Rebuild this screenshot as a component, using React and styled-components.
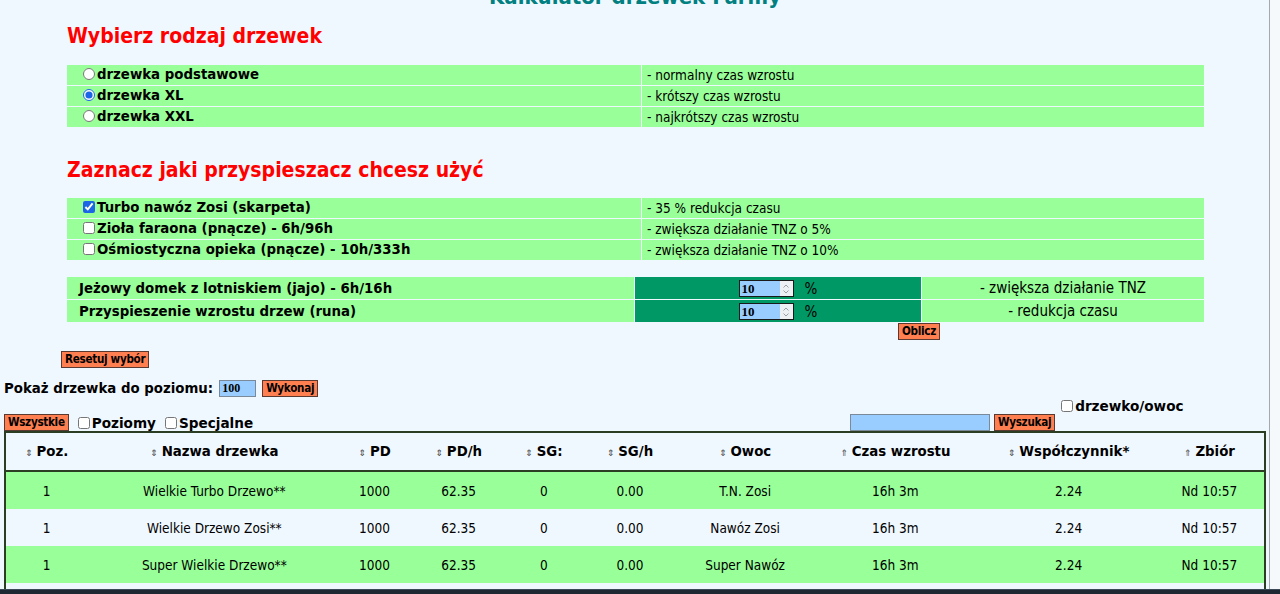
import React from 'react';
import styled, { createGlobalStyle } from 'styled-components';

const GlobalStyle = createGlobalStyle`
  html, body {
    margin: 0;
    padding: 0;
    background: #f0f8ff;
    overflow: hidden;
  }
  body {
    font-family: "DejaVu Sans", Verdana, sans-serif;
    color: #000;
  }
`;

const LIGHT = '#99ff99';
const DARK = '#009966';

const Page = styled.div`
  height: 594px;
  overflow: hidden;
`;

const Title = styled.h1`
  margin: -14px 0 0;
  padding-right: 10px;
  font: bold 22px/22px "DejaVu Sans Condensed", Tahoma, sans-serif;
  color: #008080;
  text-align: center;
`;

const Section = styled.div`
  margin-left: 66px;
  width: 1139px;
`;

const Heading = styled.h2`
  margin: ${({ $top }) => $top}px 0 0 1px;
  font: bold 21px/24px "DejaVu Sans Condensed", Tahoma, sans-serif;
  color: #ff0000;
`;

const OptionTable = styled.table`
  margin-top: ${({ $top }) => $top}px;
  width: 1139px;
  border-spacing: 1px;
  table-layout: fixed;
`;

const LabelCell = styled.td`
  width: ${({ $w }) => $w || 558}px;
  height: ${({ $h }) => $h || 20}px;
  padding: 0 0 0 ${({ $pad }) => $pad ?? 16}px;
  background: ${LIGHT};
  font: bold 13.33px "DejaVu Sans", Verdana, sans-serif;
  white-space: nowrap;
`;

const DescCell = styled.td`
  padding: 0 0 0 5px;
  background: ${LIGHT};
  font: 13.5px "DejaVu Sans Condensed", Tahoma, sans-serif;
  white-space: nowrap;
`;

const Choice = styled.label`
  display: inline-flex;
  align-items: center;
  gap: 2px;
`;

const Tick = styled.input`
  width: 12px;
  height: 12px;
  margin: 0;
  accent-color: #1a66e6;
`;

const InputCell = styled.td`
  width: 284px;
  background: ${DARK};
  text-align: center;
  white-space: nowrap;
`;

const BoostDesc = styled.td`
  background: ${LIGHT};
  text-align: center;
  font: 15px "DejaVu Sans Condensed", Tahoma, sans-serif;
`;

const NumberBox = styled.span`
  display: inline-flex;
  vertical-align: middle;
  box-sizing: border-box;
  width: 55px;
  height: 17px;
  border: 1px solid #1a1a1a;
  background: #99ccff;
`;

const NumberValue = styled.input`
  width: 38px;
  padding: 0 0 0 2px;
  border: 0;
  background: transparent;
  font: bold 13px/15px "Liberation Serif", serif;
  outline: none;
`;

const Spinner = styled.span`
  flex: 1;
  display: flex;
  align-items: center;
  justify-content: center;
  background: #eef1f4;
`;

const Percent = styled.span`
  margin-left: 11px;
  vertical-align: middle;
  font: 15px "DejaVu Sans Condensed", Tahoma, sans-serif;
`;

const Button = styled.button`
  box-sizing: border-box;
  height: 17px;
  padding: 0 3px;
  border: 1px solid #5a3a30;
  border-radius: 0;
  background: #ff7f50;
  color: #000;
  font: bold 11.6px/13px "DejaVu Sans Condensed", Tahoma, sans-serif;
  letter-spacing: -0.3px;
  cursor: pointer;
`;

const CalcRow = styled.div`
  display: flex;
  padding-left: 832px;
`;

const ResetRow = styled.div`
  display: flex;
  margin: 11px 0 0 61px;
`;

const LevelRow = styled.div`
  display: flex;
  align-items: center;
  gap: 6px;
  height: 17px;
  margin-top: 12px;
  padding-left: 4px;
  font: bold 13.33px/16px "DejaVu Sans", Verdana, sans-serif;
`;

const Field = styled.input`
  box-sizing: border-box;
  width: ${({ $w }) => $w}px;
  height: 17px;
  padding: 0 2px;
  border: 1px solid #7a8a99;
  background: #99ccff;
  font: bold 12px "Liberation Serif", serif;
  outline: none;
`;

const FilterRow = styled.div`
  display: grid;
  grid-template-columns: 846px auto;
  align-items: end;
  margin-top: 1px;
  padding-left: 4px;
  font: bold 13.6px/16px "DejaVu Sans", Verdana, sans-serif;
`;

const Group = styled.div`
  display: flex;
  align-items: flex-end;
  gap: ${({ $gap }) => $gap}px;
`;

const RaisedChoice = styled(Choice)`
  margin: 0 0 17px 2px;
`;

const DataTable = styled.table`
  margin-left: 4px;
  width: 1262px;
  border: 2px solid #2b3d22;
  border-collapse: collapse;
  table-layout: fixed;
`;

const Th = styled.th`
  height: 37px;
  padding: 0;
  border-bottom: 2px solid #2b3d22;
  background: #f0f8ff;
  font: bold 13.33px "DejaVu Sans", Verdana, sans-serif;
  white-space: nowrap;
`;

const Arrow = styled.span`
  margin-right: 4px;
  font: 9px "DejaVu Sans", sans-serif;
  color: #444;
`;

const Row = styled.tr`
  background: ${({ $alt }) => ($alt ? '#f0f8ff' : LIGHT)};
`;

const Td = styled.td`
  height: 37px;
  padding: 0;
  text-align: center;
  font: 13.5px "DejaVu Sans Condensed", Tahoma, sans-serif;
  white-space: nowrap;
`;

const ScrollTrack = styled.div`
  position: fixed;
  top: 0;
  right: 0;
  bottom: 0;
  width: 10px;
  border-left: 1px solid #a3a9ae;
  background: #f6f9fc;
`;

const BottomBar = styled.div`
  position: fixed;
  left: 0;
  right: 0;
  bottom: 0;
  height: 4px;
  border-top: 1px solid #3c4a58;
  background: #1e2833;
`;

const SpinIcon = () => (
  <svg width="8" height="12" viewBox="0 0 8 12">
    <path d="M1.5 4.5 L4 2 L6.5 4.5 M1.5 7.5 L4 10 L6.5 7.5" fill="none" stroke="#9aa0a6" strokeWidth="1" />
  </svg>
);

const NumberInput = ({ value }) => (
  <NumberBox>
    <NumberValue defaultValue={value} />
    <Spinner>
      <SpinIcon />
    </Spinner>
  </NumberBox>
);

const kinds = [
  { label: 'drzewka podstawowe', desc: '- normalny czas wzrostu' },
  { label: 'drzewka XL', desc: '- krótszy czas wzrostu', checked: true },
  { label: 'drzewka XXL', desc: '- najkrótszy czas wzrostu' },
];

const boosters = [
  { label: 'Turbo nawóz Zosi (skarpeta)', desc: '- 35 % redukcja czasu', checked: true },
  { label: 'Zioła faraona (pnącze) - 6h/96h', desc: '- zwiększa działanie TNZ o 5%' },
  { label: 'Ośmiostyczna opieka (pnącze) - 10h/333h', desc: '- zwiększa działanie TNZ o 10%' },
];

const extras = [
  { label: 'Jeżowy domek z lotniskiem (jajo) - 6h/16h', desc: '- zwiększa działanie TNZ' },
  { label: 'Przyspieszenie wzrostu drzew (runa)', desc: '- redukcja czasu' },
];

const columns = [
  { name: 'Poz.', w: 82 },
  { name: 'Nazwa drzewka', w: 254 },
  { name: 'PD', w: 66 },
  { name: 'PD/h', w: 102 },
  { name: 'SG:', w: 68 },
  { name: 'SG/h', w: 104 },
  { name: 'Owoc', w: 126 },
  { name: 'Czas wzrostu', w: 174, up: true },
  { name: 'Współczynnik*', w: 172 },
  { name: 'Zbiór', w: 110, up: true },
];

const trees = [
  ['1', 'Wielkie Turbo Drzewo**', '1000', '62.35', '0', '0.00', 'T.N. Zosi', '16h 3m', '2.24', 'Nd 10:57'],
  ['1', 'Wielkie Drzewo Zosi**', '1000', '62.35', '0', '0.00', 'Nawóz Zosi', '16h 3m', '2.24', 'Nd 10:57'],
  ['1', 'Super Wielkie Drzewo**', '1000', '62.35', '0', '0.00', 'Super Nawóz', '16h 3m', '2.24', 'Nd 10:57'],
  ['2', 'Drzewo Jabłoni', '500', '41.20', '0', '0.00', 'Jabłko', '12h 8m', '1.96', 'Nd 06:52'],
];

export default function App() {
  return (
    <Page>
      <GlobalStyle />
      <Title>Kalkulator drzewek Farmy</Title>

      <Section>
        <Heading $top={16}>Wybierz rodzaj drzewek</Heading>
        <OptionTable $top={16}>
          <tbody>
            {kinds.map((k) => (
              <tr key={k.label}>
                <LabelCell>
                  <Choice>
                    <Tick type="radio" name="kind" defaultChecked={k.checked} />
                    {k.label}
                  </Choice>
                </LabelCell>
                <DescCell>{k.desc}</DescCell>
              </tr>
            ))}
          </tbody>
        </OptionTable>

        <Heading $top={30}>Zaznacz jaki przyspieszacz chcesz użyć</Heading>
        <OptionTable $top={15}>
          <tbody>
            {boosters.map((b) => (
              <tr key={b.label}>
                <LabelCell>
                  <Choice>
                    <Tick type="checkbox" defaultChecked={b.checked} />
                    {b.label}
                  </Choice>
                </LabelCell>
                <DescCell>{b.desc}</DescCell>
              </tr>
            ))}
          </tbody>
        </OptionTable>

        <OptionTable $top={15}>
          <tbody>
            {extras.map((e) => (
              <tr key={e.label}>
                <LabelCell $w={555} $h={22} $pad={12}>
                  {e.label}
                </LabelCell>
                <InputCell>
                  <NumberInput value="10" />
                  <Percent>%</Percent>
                </InputCell>
                <BoostDesc>{e.desc}</BoostDesc>
              </tr>
            ))}
          </tbody>
        </OptionTable>

        <CalcRow>
          <Button>Oblicz</Button>
        </CalcRow>
      </Section>

      <ResetRow>
        <Button>Resetuj wybór</Button>
      </ResetRow>

      <LevelRow>
        Pokaż drzewka do poziomu:
        <Field $w={37} defaultValue="100" />
        <Button>Wykonaj</Button>
      </LevelRow>

      <FilterRow>
        <Group $gap={9}>
          <Button>Wszystkie</Button>
          <Choice>
            <Tick type="checkbox" />
            Poziomy
          </Choice>
          <Choice>
            <Tick type="checkbox" />
            Specjalne
          </Choice>
        </Group>
        <Group $gap={4}>
          <Field $w={140} />
          <Button>Wyszukaj</Button>
          <RaisedChoice>
            <Tick type="checkbox" />
            drzewko/owoc
          </RaisedChoice>
        </Group>
      </FilterRow>

      <DataTable>
        <colgroup>
          {columns.map((c) => (
            <col key={c.name} style={{ width: c.w }} />
          ))}
        </colgroup>
        <thead>
          <tr>
            {columns.map((c) => (
              <Th key={c.name}>
                <Arrow>{c.up ? '⇑' : '⇕'}</Arrow>
                {c.name}
              </Th>
            ))}
          </tr>
        </thead>
        <tbody>
          {trees.map((t, i) => (
            <Row key={t[1]} $alt={i % 2 === 1}>
              {t.map((v, j) => (
                <Td key={j}>{v}</Td>
              ))}
            </Row>
          ))}
        </tbody>
      </DataTable>

      <ScrollTrack />
      <BottomBar />
    </Page>
  );
}
